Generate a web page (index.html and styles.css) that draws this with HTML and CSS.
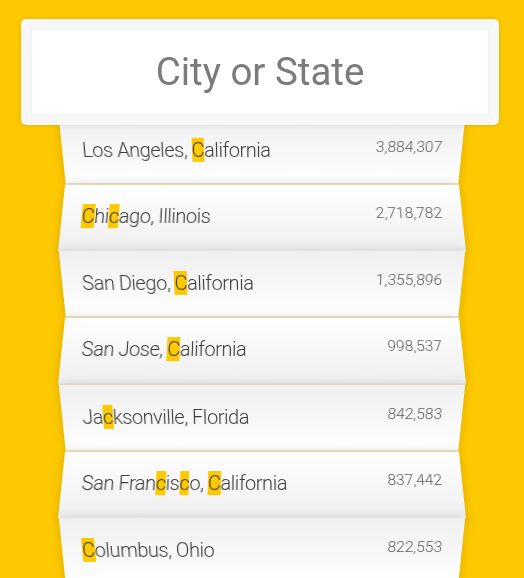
FILE: index.html
```html
<!DOCTYPE html>
<html lang="en">
<head>
<meta charset="UTF-8">
<title>Type Ahead</title>
<link rel="stylesheet" href="styles.css">
</head>
<body>
<form class="search-form">
  <input type="text" class="search" placeholder="City or State">
  <ul class="suggestions">
    <li><span class="name">Los Angeles, <span class="hl">C</span>alifornia</span><span class="population">3,884,307</span></li>
    <li><span class="name"><span class="hl">C</span>hi<span class="hl">c</span>ago, Illinois</span><span class="population">2,718,782</span></li>
    <li><span class="name">San Diego, <span class="hl">C</span>alifornia</span><span class="population">1,355,896</span></li>
    <li><span class="name">San Jose, <span class="hl">C</span>alifornia</span><span class="population">998,537</span></li>
    <li><span class="name">Ja<span class="hl">c</span>ksonville, Florida</span><span class="population">842,583</span></li>
    <li><span class="name">San Fran<span class="hl">c</span>is<span class="hl">c</span>o, <span class="hl">C</span>alifornia</span><span class="population">837,442</span></li>
    <li><span class="name"><span class="hl">C</span>olumbus, Ohio</span><span class="population">822,553</span></li>
  </ul>
</form>
</body>
</html>
```
FILE: styles.css
```css
html {
  box-sizing: border-box;
  background: #fdc900;
  font-family: Roboto, "Liberation Sans", sans-serif;
  font-size: 20px;
  font-weight: 300;
  overflow: hidden;
}
*, *::before, *::after {
  box-sizing: inherit;
}
body {
  margin: 0;
  padding: 0 8px;
  overflow: hidden;
}
.search-form {
  max-width: 400px;
  margin: 0 auto;
  padding-top: 19px;
}
.search {
  display: block;
  position: relative;
  z-index: 2;
  width: 478px;
  margin: 0 0 -10px -41px;
  padding: 20px;
  text-align: center;
  outline: 0;
  border: 10px solid #f7f7f7;
  border-radius: 5px;
  background: #fff;
  font-family: Roboto, "Liberation Sans", sans-serif;
  font-weight: 400;
  font-size: 38.5px;
  line-height: 46px;
  box-shadow: 0 0 5px rgba(0, 0, 0, 0.12), inset 0 0 2px rgba(0, 0, 0, 0.19);
}
.search::placeholder {
  color: #7b7b7b;
}
.suggestions {
  margin: 0;
  padding: 0;
}
.suggestions li {
  list-style: none;
  border-bottom: 1px solid #d8d8d8;
  box-shadow: 0 0 10px rgba(0, 0, 0, 0.14);
  margin: 0;
  padding: 20px;
  display: flex;
  justify-content: space-between;
  line-height: 25.7px;
  color: #3c3c3c;
}
.suggestions li:nth-child(even) {
  transform: perspective(100px) rotateX(3deg) translateY(2px) scale(1.001);
  background: linear-gradient(to bottom, #ffffff 0%, #efefef 100%);
}
.suggestions li:nth-child(odd) {
  transform: perspective(100px) rotateX(-3deg) translateY(3px);
  background: linear-gradient(to top, #ffffff 0%, #efefef 100%);
}
.name {
  letter-spacing: -0.45px;
}
.population {
  font-size: 15.5px;
  line-height: 18px;
  color: #5a5a5a;
}
.hl {
  background: #fdc900;
}
```
